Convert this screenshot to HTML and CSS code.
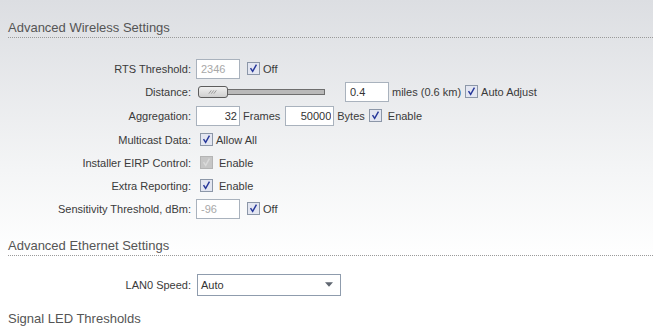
FILE: index.html
```html
<!DOCTYPE html>
<html lang="en">
<head>
    <meta charset="UTF-8">
    <title>Advanced Settings</title>
    <link rel="stylesheet" href="styles.css">
</head>
<body>
    <h3 class="section-title first">Advanced Wireless Settings</h3>
    <div class="form">
        <label class="lbl">RTS Threshold:</label>
        <div class="field">
            <input class="txt" type="text" value="2346" disabled>
            <span class="chk gap6"><svg viewBox="0 0 13 13"><path d="M3 6 L5.5 10 L10 2" /></svg></span>
            <span class="opt">Off</span>
        </div>

        <label class="lbl">Distance:</label>
        <div class="field">
            <div class="slider">
                <div class="handle"><svg viewBox="0 0 30 12"><path d="M10 8 L13 4 M13 8 L16 4 M16 8 L19 4" /></svg></div>
                <div class="track"></div>
            </div>
            <input class="txt" type="text" value="0.4">
            <span class="opt">miles (0.6 km)</span>
            <span class="chk gap4"><svg viewBox="0 0 13 13"><path d="M3 6 L5.5 10 L10 2" /></svg></span>
            <span class="opt">Auto Adjust</span>
        </div>

        <label class="lbl tall">Aggregation:</label>
        <div class="field tall">
            <input class="txt num" type="text" value="32">
            <span class="opt">Frames</span>
            <input class="txt num wide" type="text" value="50000">
            <span class="opt">Bytes</span>
            <span class="chk gap4"><svg viewBox="0 0 13 13"><path d="M3 6 L5.5 10 L10 2" /></svg></span>
            <span class="opt wide-gap">Enable</span>
        </div>

        <label class="lbl">Multicast Data:</label>
        <div class="field">
            <span class="chk gap4"><svg viewBox="0 0 13 13"><path d="M3 6 L5.5 10 L10 2" /></svg></span>
            <span class="opt">Allow All</span>
        </div>

        <label class="lbl">Installer EIRP Control:</label>
        <div class="field">
            <span class="chk gap4 off"><svg viewBox="0 0 13 13"><path d="M3 6 L5.5 10 L10 2" /></svg></span>
            <span class="opt wide-gap">Enable</span>
        </div>

        <label class="lbl">Extra Reporting:</label>
        <div class="field">
            <span class="chk gap4"><svg viewBox="0 0 13 13"><path d="M3 6 L5.5 10 L10 2" /></svg></span>
            <span class="opt wide-gap">Enable</span>
        </div>

        <label class="lbl">Sensitivity Threshold, dBm:</label>
        <div class="field">
            <input class="txt" type="text" value="-96" disabled>
            <span class="chk gap6"><svg viewBox="0 0 13 13"><path d="M3 6 L5.5 10 L10 2" /></svg></span>
            <span class="opt">Off</span>
        </div>
    </div>

    <h3 class="section-title">Advanced Ethernet Settings</h3>
    <div class="form eth">
        <label class="lbl">LAN0 Speed:</label>
        <div class="field">
            <div class="select">
                <span>Auto</span>
                <svg viewBox="0 0 7 4"><path d="M0 0 H7 L3.5 4 Z" /></svg>
            </div>
        </div>
    </div>

    <h3 class="section-title last">Signal LED Thresholds</h3>
</body>
</html>
```

FILE: styles.css
```css
body {
    margin: 0;
    padding: 0 0 0 8px;
    font-family: "Liberation Sans", Arial, sans-serif;
    font-size: 11px;
    color: #3a3a3a;
    background: linear-gradient(#dcdee2, #f4f5f6 170px, #ffffff 260px);
    min-height: 326px;
    overflow: hidden;
}
.section-title {
    margin: 18px 0 0 0;
    padding-bottom: 1px;
    font-size: 13px;
    font-weight: normal;
    line-height: 16px;
    color: #555;
    border-bottom: 1px dotted #9a9a9a;
}
.section-title.first {
    padding-top: 20px;
    margin-top: 0;
}
.section-title.last {
    border-bottom: none;
    margin-top: 15px;
}
.form {
    display: grid;
    grid-template-columns: 183px 1fr;
    column-gap: 5px;
    margin-top: 19px;
}
.form.eth {
    margin-top: 17px;
}
.lbl, .field {
    height: 23px;
    display: flex;
    align-items: center;
}
.lbl {
    justify-content: flex-end;
    white-space: nowrap;
}
.tall {
    height: 25px;
}
.field {
    white-space: nowrap;
}
.txt {
    box-sizing: border-box;
    width: 44px;
    height: 20px;
    margin: 0;
    padding: 0 4px;
    border: 1px solid #a9b2bd;
    background: #fff;
    font-family: "Liberation Sans", Arial, sans-serif;
    font-size: 11px;
    color: #333;
    outline: none;
}
.txt:disabled {
    color: #a8a8a8;
    background: #fff;
}
.txt.num {
    text-align: right;
    padding-right: 2px;
}
.txt.wide {
    width: 49px;
    margin-left: 5px;
}
.opt {
    margin-left: 3px;
}
.opt.wide-gap {
    margin-left: 6px;
}
.chk {
    box-sizing: border-box;
    width: 13px;
    height: 13px;
    border: 1px solid #8c97a8;
    background: #e3e6f1;
    display: inline-block;
}
.chk svg {
    display: block;
    width: 11px;
    height: 11px;
}
.chk path {
    fill: none;
    stroke: #26379a;
    stroke-width: 1.7;
}
.chk.off {
    background: #c6c6c6;
    border-color: #b4b4b4;
}
.chk.off path {
    stroke: #dadada;
}
.gap6 {
    margin-left: 7px;
}
.gap4 {
    margin-left: 4px;
}
.slider {
    display: flex;
    align-items: center;
    margin-left: 2px;
    margin-right: 20px;
}
.handle {
    box-sizing: border-box;
    width: 30px;
    height: 12px;
    border: 1px solid #5c5c5c;
    border-radius: 3px;
    background: linear-gradient(#f0f0f0, #cfcfcf);
}
.handle svg {
    display: block;
    width: 28px;
    height: 10px;
}
.handle path {
    stroke: #8a8a8a;
    stroke-width: 1;
    fill: none;
}
.track {
    box-sizing: border-box;
    width: 97px;
    height: 6px;
    border: 1px solid #6e6e6e;
    border-left: none;
    background: #b9b9b9;
}
.select {
    box-sizing: border-box;
    width: 144px;
    height: 22px;
    margin-left: 1px;
    border: 1px solid #8f9cad;
    background: #fff;
    display: flex;
    align-items: center;
    justify-content: space-between;
    padding: 0 7px 0 3px;
    color: #333;
}
.select svg {
    width: 8px;
    height: 5px;
}
.select path {
    fill: #5f6670;
}
```
